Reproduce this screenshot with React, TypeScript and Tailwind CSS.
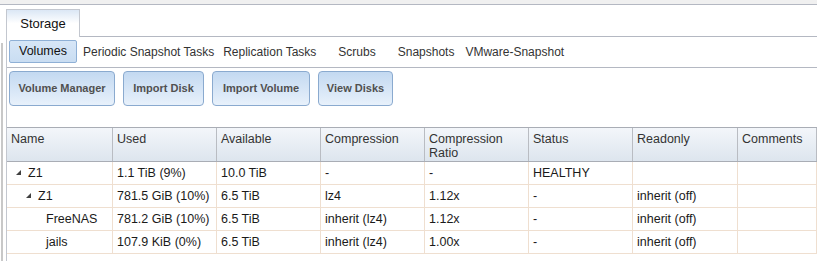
import type { ReactNode } from 'react';

type Row = {
  level: number;
  expandable: boolean;
  cells: string[];
};

const columns = ['Name', 'Used', 'Available', 'Compression', 'Compression Ratio', 'Status', 'Readonly', 'Comments'];

const rows: Row[] = [
  { level: 0, expandable: true, cells: ['Z1', '1.1 TiB (9%)', '10.0 TiB', '-', '-', 'HEALTHY', '', ''] },
  { level: 1, expandable: true, cells: ['Z1', '781.5 GiB (10%)', '6.5 TiB', 'lz4', '1.12x', '-', 'inherit (off)', ''] },
  { level: 2, expandable: false, cells: ['FreeNAS', '781.2 GiB (10%)', '6.5 TiB', 'inherit (lz4)', '1.12x', '-', 'inherit (off)', ''] },
  { level: 2, expandable: false, cells: ['jails', '107.9 KiB (0%)', '6.5 TiB', 'inherit (lz4)', '1.00x', '-', 'inherit (off)', ''] },
];

const subTabs = [
  { label: 'Periodic Snapshot Tasks', cls: 'ml-[6px]' },
  { label: 'Replication Tasks', cls: 'ml-[9px]' },
  { label: 'Scrubs', cls: 'ml-[22px]' },
  { label: 'Snapshots', cls: 'ml-[22px]' },
  { label: 'VMware-Snapshot', cls: 'ml-[11px]' },
];

const actions = [
  { label: 'Volume Manager', w: 'w-[106px]' },
  { label: 'Import Disk', w: 'w-[81px]' },
  { label: 'Import Volume', w: 'w-[98px]' },
  { label: 'View Disks', w: 'w-[75px]' },
];

const gridCols = 'grid grid-cols-[106px_104px_104px_104px_104px_104px_105px_1fr]';

function Expander() {
  return (
    <svg width="6" height="6" viewBox="0 0 6 6" className="shrink-0">
      <polygon points="5,0 5,5 0,5" fill="#404040" />
    </svg>
  );
}

function NameCell({ row }: { row: Row }): ReactNode {
  // indent per tree level, leaves have no expander
  const pad = row.level === 0 ? 'pl-[9px]' : row.level === 1 ? 'pl-[19px]' : 'pl-[39px]';
  return (
    <div className={`flex items-center ${pad} border-r border-[#efdfd0]`}>
      {row.expandable && (
        <span className="w-[12px] flex items-center">
          <Expander />
        </span>
      )}
      <span>{row.cells[0]}</span>
    </div>
  );
}

export default function App() {
  return (
    <div className="w-[817px] h-[261px] overflow-hidden bg-white flex flex-col font-['Liberation_Sans',Arial,sans-serif] text-[12.5px] text-[#1a1a1a] select-none">
      {/* window strip */}
      <div className="h-[5px] shrink-0 bg-[#f0f0f0] border-b border-[#b4b8c2]" />

      <div className="flex flex-1 min-h-0">
        {/* left splitter */}
        <div className="w-[6px] shrink-0 flex flex-col">
          <div className="mt-[38px] ml-[1px] w-[2px] flex-1 bg-[#c8c8c8]" />
        </div>

        <div className="flex-1 flex flex-col min-w-0">
          {/* main tab bar */}
          <div className="flex mt-[4px] h-[28px] shrink-0">
            <div className="w-[74px] h-[28px] border border-b-0 border-[#c3c7cf] bg-linear-to-b from-[#dbe7f5] via-white to-white flex items-center justify-center text-[13px] text-[#111]">
              Storage
            </div>
            <div className="flex-1 border-b border-[#b4b8c2]" />
          </div>

          {/* panel */}
          <div className="flex-1 flex flex-col border-l border-[#c3c7cf]">
            {/* sub tabs */}
            <div className="h-[31px] shrink-0 border-b border-[#b4b8c2] flex items-start pt-[3px] text-[12px] text-[#333]">
              <div className="ml-[2px] w-[68px] h-[23px] border border-[#8fb0d6] rounded-[2px] bg-linear-to-b from-[#d7e6f7] to-[#c9ddf2] flex items-center justify-center text-[12.5px] text-[#111]">
                Volumes
              </div>
              {subTabs.map(t => (
                <span key={t.label} className={`${t.cls} h-[23px] flex items-center`}>
                  {t.label}
                </span>
              ))}
            </div>

            {/* action buttons */}
            <div className="flex gap-[8px] pl-[2px] pt-[3px] shrink-0">
              {actions.map(a => (
                <button
                  key={a.label}
                  className={`${a.w} h-[35px] rounded-[4px] border border-[#8aaacf] bg-linear-to-b from-[#c3d9f1] to-[#e8f1fb] text-[11px] font-bold text-[#505050]`}
                >
                  {a.label}
                </button>
              ))}
            </div>

            {/* volumes table */}
            <div className="mt-[21px]">
              <div className={`${gridCols} h-[35px] border-t border-b border-[#a9adb5] bg-linear-to-b from-[#f3f6fa] to-[#dde5ee] text-[#333]`}>
                {columns.map(c => (
                  <div key={c} className="pl-[4px] pt-[4px] leading-[14px] border-r border-[#b9bcc2] w-full">
                    {c === 'Compression Ratio' ? (
                      <>
                        Compression
                        <br />
                        Ratio
                      </>
                    ) : (
                      c
                    )}
                  </div>
                ))}
              </div>
              {rows.map((r, i) => (
                <div key={i} className={`${gridCols} h-[23px] border-b border-[#efdfd0]`}>
                  <NameCell row={r} />
                  {r.cells.slice(1).map((v, j) => (
                    <div key={j} className="pl-[4px] flex items-center border-r border-[#efdfd0]">
                      {v}
                    </div>
                  ))}
                </div>
              ))}
            </div>
          </div>
        </div>
      </div>
    </div>
  );
}
